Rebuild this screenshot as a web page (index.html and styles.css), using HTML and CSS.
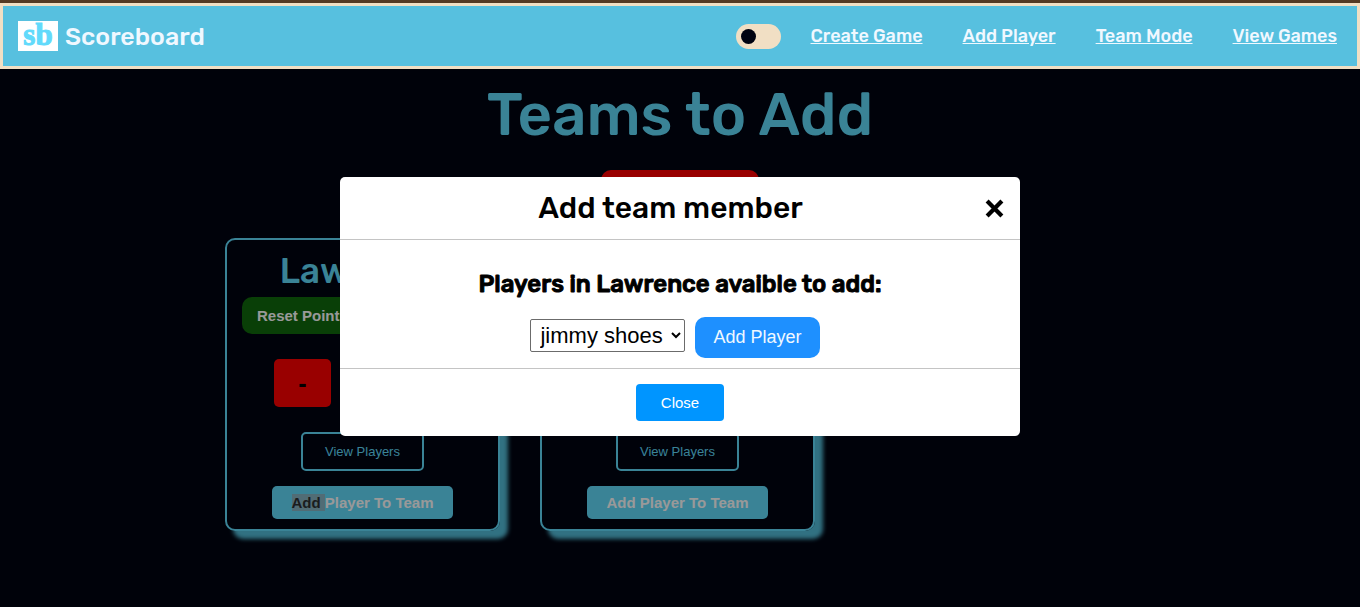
FILE: index.html
```html
<!DOCTYPE html>
<html lang="en">
<head>
<meta charset="utf-8">
<title>Scoreboard</title>
<meta name="viewport" content="width=device-width, initial-scale=1">
<link rel="stylesheet" href="styles.css">
</head>
<body>
<header class="site-header">
  <a class="brand" href="#"><span class="logo">sb</span><span class="brand-name">Scoreboard</span></a>
  <nav class="nav">
    <input class="toggle" type="checkbox" aria-label="Theme">
    <a href="#">Create Game</a>
    <a href="#">Add Player</a>
    <a href="#">Team Mode</a>
    <a href="#">View Games</a>
  </nav>
</header>
<main class="page">
  <h1 class="page-title">Teams to Add</h1>
  <button class="clear" type="button" aria-label="Clear teams"></button>
  <section class="teams">
    <article class="team">
      <h2 class="team-name">Lawrence</h2>
      <button class="reset" type="button">Reset Points</button>
      <div class="score"><button class="minus" type="button">-</button></div>
      <button class="view" type="button">View Players</button>
      <button class="add" type="button"><mark>Add </mark>Player To Team</button>
    </article>
    <article class="team">
      <button class="view" type="button">View Players</button>
      <button class="add" type="button">Add Player To Team</button>
    </article>
  </section>
</main>
<div class="overlay">
  <div class="modal" role="dialog" aria-labelledby="modal-title">
    <div class="modal-head">
      <h2 class="modal-title" id="modal-title">Add team member</h2>
      <button class="dismiss" type="button" aria-label="Dismiss">
        <svg viewBox="0 0 18 18" width="19" height="19"><path d="M2 2L16 16M16 2L2 16" stroke="#000" stroke-width="4"/></svg>
      </button>
    </div>
    <div class="modal-body">
      <label class="prompt" for="player">Players in Lawrence avaible to add:</label>
      <div class="picker">
        <select class="player" id="player"><option>jimmy shoes</option></select>
        <button class="add-player" type="button">Add Player</button>
      </div>
    </div>
    <div class="modal-foot"><button class="close" type="button">Close</button></div>
  </div>
</div>
</body>
</html>
```
FILE: styles.css
```css
* { box-sizing: border-box; }
body {
  margin: 0;
  min-height: 100vh;
  border-top: 3px solid #8e613c;
  background: #000411;
  font-family: Rubik, Inter, sans-serif;
}
h1, h2 { margin: 0; font-weight: 500; }
button { border: 0; padding: 0; font-family: "Liberation Sans", sans-serif; cursor: pointer; }

.site-header {
  position: relative;
  z-index: 2;
  display: flex;
  align-items: center;
  justify-content: space-between;
  height: 66px;
  padding: 0 20px 0 15px;
  border: 3px solid #f1dfc4;
  background: #57c0df;
}
.brand { display: flex; align-items: center; gap: 7px; color: #f0f8ff; text-decoration: none; }
.logo {
  width: 40px;
  height: 30px;
  background: #fff;
  color: #61dafb;
  font: bold 31px/28px "Liberation Serif", serif;
  text-align: center;
  -webkit-text-stroke: 1px #61dafb;
}
.brand-name { font-size: 25px; font-weight: 500; }
.nav { display: flex; align-items: center; gap: 40px; }
.nav a { color: #f0f8ff; font-size: 18px; font-weight: 500; }
.toggle {
  appearance: none;
  display: flex;
  align-items: center;
  width: 45px;
  height: 25px;
  margin: 0 -10px 0 0;
  padding: 0 5px;
  border-radius: 13px;
  background: #f1dfc4;
}
.toggle::before { content: ""; width: 15px; height: 15px; border-radius: 50%; background: #000311; }

.page { display: flex; flex-direction: column; align-items: center; padding: 10px 24px 40px; }
.page-title { color: #61dafb; font-size: 60px; line-height: 72px; }
.clear { width: 158px; height: 40px; margin-top: 19px; border-radius: 10px; background: #f00; }
.teams {
  display: grid;
  grid-template-columns: repeat(auto-fill, 275px);
  gap: 40px;
  width: 100%;
  max-width: 910px;
  margin-top: 28px;
}
.team {
  display: flex;
  flex-direction: column;
  align-items: center;
  justify-content: flex-end;
  padding: 10px 15px;
  border: 2px solid #61dafb;
  border-radius: 10px;
  box-shadow: 8px 8px 4px #53bdd9;
}
.team-name { color: #61dafb; font-size: 35px; line-height: 42px; }
.reset {
  align-self: flex-start;
  height: 37px;
  margin-top: 5px;
  padding: 0 15px;
  border-radius: 10px;
  background: #106a0d;
  color: #fff;
  font-size: 15px;
  font-weight: bold;
}
.score { align-self: stretch; margin-top: 25px; padding-left: 32px; }
.minus { display: block; width: 57px; height: 48px; border-radius: 5px; background: #f00; font-size: 25px; font-weight: bold; }
.view {
  height: 39px;
  margin-top: 25px;
  padding: 0 22px;
  border: 2px solid #61dafb;
  border-radius: 5px;
  background: transparent;
  color: #61dafb;
  font-size: 13px;
}
.add {
  height: 33px;
  margin-top: 15px;
  padding: 0 20px;
  border-radius: 5px;
  background: #61dafb;
  color: #fff;
  font-size: 15px;
  font-weight: bold;
}
.add mark { background: #88b5c4; color: #2c3033; }

.overlay {
  position: fixed;
  inset: 0;
  z-index: 1;
  display: flex;
  align-items: center;
  justify-content: center;
  padding-top: 6px;
  background: rgba(0, 0, 0, 0.4);
}
.modal { width: 50%; border-radius: 5px; background: #fff; color: #000; }
.modal-head { display: flex; align-items: center; padding: 13px 16px 12px; border-bottom: 1px solid #c4c4c4; }
.modal-title { flex: 1; font-size: 30px; line-height: 37px; text-align: center; }
.dismiss { display: flex; background: transparent; }
.modal-body { display: flex; flex-direction: column; align-items: center; gap: 18px; padding: 30px 16px 10px; border-bottom: 1px solid #c4c4c4; }
.prompt { font-size: 24px; font-weight: 500; line-height: 29px; -webkit-text-stroke: 1px #000; }
.picker { display: flex; align-items: flex-start; gap: 10px; padding-right: 10px; }
.player {
  width: 155px;
  height: 33px;
  margin-top: 2px;
  padding: 0 0 0 5px;
  border: 1px solid #6b6b6b;
  border-radius: 2px;
  background: #fff;
  color: #000;
  font: 22px "Liberation Sans", sans-serif;
}
.add-player { height: 41px; padding: 0 18px; border-radius: 10px; background: #1e90ff; color: #f0f8ff; font-size: 18px; }
.modal-foot { display: flex; justify-content: center; padding: 15px; }
.close { width: 88px; height: 37px; border-radius: 4px; background: #0095ff; color: #fff; font-size: 15px; }
```
